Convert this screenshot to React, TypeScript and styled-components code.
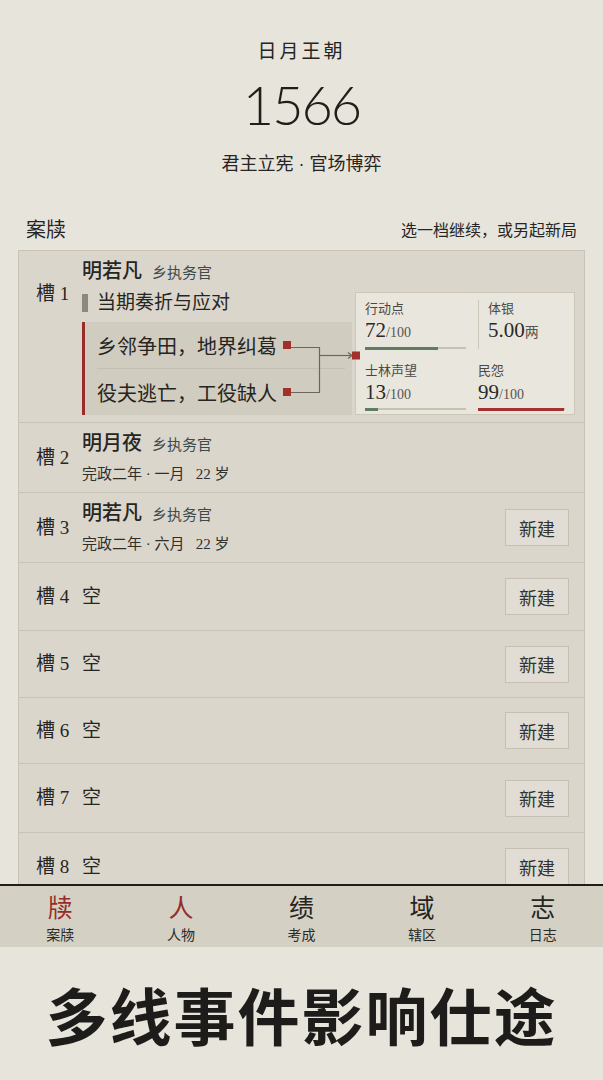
import React from 'react'
import styled, { createGlobalStyle } from 'styled-components'

const GlobalStyle = createGlobalStyle`
  html, body {
    margin: 0;
    padding: 0;
    background: #e7e4dc;
  }
  body {
    font-family: "Liberation Serif", "Noto Sans CJK SC", serif;
    color: #262522;
  }
`

const Page = styled.div`
  width: 603px;
  height: 1080px;
  display: flex;
  flex-direction: column;
  overflow: hidden;
  background: #e7e4dc;
`

const Screen = styled.div`
  height: 947px;
  display: flex;
  flex-direction: column;
`

const Scroll = styled.div`
  flex: 1;
  min-height: 0;
  overflow: hidden;
`

const Header = styled.header`
  display: flex;
  flex-direction: column;
  align-items: center;
  padding-top: 37px;
  font-family: "Noto Sans CJK SC", sans-serif;
`

const Dynasty = styled.div`
  font-size: 19px;
  line-height: 26px;
  letter-spacing: 3px;
`

const Year = styled.div`
  margin-top: 12px;
  font-family: Lato, "DejaVu Sans", sans-serif;
  font-weight: 300;
  font-size: 54px;
  line-height: 60px;
  letter-spacing: -2px;
  color: #1f1e1b;
`

const Motto = styled.div`
  margin-top: 14px;
  height: 26px;
  font-size: 18px;
  line-height: 26px;
`

const Sep = styled.span`
  font-family: "Liberation Sans", sans-serif;
  white-space: pre;
`

const SectionHead = styled.div`
  display: flex;
  justify-content: space-between;
  align-items: center;
  margin-top: 41px;
  padding: 0 26px;
  font-family: "Noto Sans CJK SC", sans-serif;
  line-height: 26px;
`

const SectionTitle = styled.span`
  font-size: 20px;
`

const SectionHint = styled.span`
  font-size: 16px;
`

const Panel = styled.div`
  margin: 8px 18px 0;
  border: 1px solid #c9c3b6;
  border-bottom: none;
  background: #dbd6cb;
`

const Row = styled.div<{ $h: number }>`
  display: grid;
  grid-template-columns: 46px 1fr auto;
  align-items: center;
  height: ${({ $h }) => $h}px;
  padding: 0 15px 0 17px;
  box-sizing: border-box;
  & + & {
    border-top: 1px solid #c9c3b6;
  }
`

const FirstRow = styled(Row)`
  align-items: start;
  padding-top: 8px;
`

const SlotLabel = styled.div<{ $top?: number }>`
  font-size: 19px;
  line-height: 24px;
  margin-top: ${({ $top }) => $top || 0}px;
  white-space: nowrap;
`

const Empty = styled.span`
  font-size: 19px;
  line-height: 24px;
`

const NameLine = styled.div`
  display: flex;
  align-items: baseline;
  line-height: 24px;
`

const Name = styled.span`
  font-size: 20px;
  font-weight: 500;
`

const Rank = styled.span`
  margin-left: 10px;
  font-size: 15px;
  color: #3d4b4c;
`

const Info = styled.div`
  margin-top: 6px;
  font-size: 15px;
  line-height: 22px;
  color: #302f2b;
  white-space: pre;
`

const Body = styled.div`
  display: flex;
  gap: 3px;
  margin-top: 7px;
`

const LeftCol = styled.div`
  width: 270px;
`

const Subtitle = styled.div`
  display: flex;
  align-items: center;
  gap: 9px;
  font-size: 19px;
  line-height: 22px;
  &::before {
    content: '';
    width: 6px;
    height: 18px;
    background: #8e897f;
  }
`

const EventBox = styled.div`
  position: relative;
  margin-top: 8px;
  border-left: 3px solid #9a2c28;
  background: #d1ccc0;
`

const EventLine = styled.div`
  display: flex;
  align-items: center;
  height: 46px;
  padding-left: 12px;
`

const EventText = styled.span`
  width: 186px;
  font-size: 20px;
  white-space: nowrap;
`

const Dot = styled.span`
  width: 8px;
  height: 8px;
  background: #a2302b;
`

const EventDivider = styled.div`
  height: 1px;
  margin: 0 7px 0 12px;
  background: #c5bfb2;
`

const Connector = styled.svg`
  position: absolute;
  left: 206px;
  top: 0;
  overflow: visible;
`

const StatCard = styled.div`
  width: 220px;
  height: 123px;
  box-sizing: border-box;
  padding: 7px 9px 0;
  border: 1px solid #cdc7ba;
  background: #e9e6de;
  display: grid;
  grid-template-columns: 101px 1fr;
  column-gap: 12px;
  row-gap: 13px;
  align-content: start;
`

const StatCell = styled.div<{ $divider?: boolean }>`
  padding-left: ${({ $divider }) => ($divider ? '9px' : '0')};
  border-left: ${({ $divider }) => ($divider ? '1px solid #cdc7ba' : 'none')};
`

const StatLabel = styled.div`
  font-size: 13px;
  line-height: 17px;
  color: #4b4944;
`

const StatValue = styled.div`
  margin-top: 1px;
  font-size: 21px;
  line-height: 24px;
  color: #2b2a27;
`

const StatUnit = styled.span`
  font-size: 14px;
  color: #57554f;
`

const Bar = styled.div`
  margin-top: 2px;
  height: 2px;
  background: #c6c1b5;
`

const Fill = styled.div<{ $color: string }>`
  height: 3px;
  margin-top: -0.5px;
  background: ${({ $color }) => $color};
`

const NewButton = styled.button`
  width: 64px;
  height: 37px;
  padding: 0;
  border: 1px solid #c6c0b3;
  background: #e1ddd4;
  font-family: "Noto Sans CJK SC", sans-serif;
  font-size: 18px;
  color: #34332f;
`

const Nav = styled.nav`
  display: grid;
  grid-template-columns: repeat(5, 1fr);
  height: 63px;
  box-sizing: border-box;
  padding-top: 6px;
  border-top: 2px solid #1e1d1b;
  background: #d5d0c4;
  font-family: "Noto Sans CJK SC", sans-serif;
`

const NavItem = styled.div<{ $active?: boolean }>`
  display: flex;
  flex-direction: column;
  align-items: center;
  color: ${({ $active }) => ($active ? '#962d2a' : '#252420')};
`

const NavGlyph = styled.span`
  font-size: 25px;
  line-height: 28px;
`

const NavLabel = styled.span`
  margin-top: 5px;
  font-size: 14px;
  line-height: 18px;
  color: #2a2925;
`

const Caption = styled.div`
  flex: 1;
  display: flex;
  align-items: center;
  justify-content: center;
  font-family: "Noto Sans CJK SC", sans-serif;
  font-weight: 700;
  font-size: 62px;
  letter-spacing: 2px;
  color: #1d1c1a;
`

type Stat = { label: string; value: string; unit: string; pct?: number; color?: string; divider?: boolean }

const stats: Stat[] = [
  { label: '行动点', value: '72', unit: '/100', pct: 72, color: '#5f7c66' },
  { label: '体银', value: '5.00', unit: '两', divider: true },
  { label: '士林声望', value: '13', unit: '/100', pct: 13, color: '#5f7c66' },
  { label: '民怨', value: '99', unit: '/100', pct: 99, color: '#a3332e' },
]

const nav = [
  { glyph: '牍', label: '案牍', active: true },
  { glyph: '人', label: '人物', active: true },
  { glyph: '绩', label: '考成' },
  { glyph: '域', label: '辖区' },
  { glyph: '志', label: '日志' },
]

const emptySlots = [
  { n: 4, h: 68 },
  { n: 5, h: 67 },
  { n: 6, h: 66 },
  { n: 7, h: 69 },
  { n: 8, h: 68 },
]

export default function App() {
  return (
    <Page>
      <GlobalStyle />
      <Screen>
        <Scroll>
          <Header>
            <Dynasty>日月王朝</Dynasty>
            <Year>1566</Year>
            <Motto>
              君主立宪<Sep> · </Sep>官场博弈
            </Motto>
          </Header>
          <SectionHead>
            <SectionTitle>案牍</SectionTitle>
            <SectionHint>选一档继续，或另起新局</SectionHint>
          </SectionHead>
          <Panel>
            <FirstRow $h={171}>
              <SlotLabel $top={23}>槽 1</SlotLabel>
              <div>
                <NameLine>
                  <Name>明若凡</Name>
                  <Rank>乡执务官</Rank>
                </NameLine>
                <Body>
                  <LeftCol>
                    <Subtitle>当期奏折与应对</Subtitle>
                    <EventBox>
                      <EventLine>
                        <EventText>乡邻争田，地界纠葛</EventText>
                        <Dot />
                      </EventLine>
                      <EventDivider />
                      <EventLine>
                        <EventText>役夫逃亡，工役缺人</EventText>
                        <Dot />
                      </EventLine>
                      <Connector width="80" height="94" viewBox="0 0 80 94">
                        <path d="M0 25.5H28.5V70.5H0" fill="none" stroke="#6b6760" strokeWidth="1.2" />
                        <path d="M28.5 33.5H60" fill="none" stroke="#6b6760" strokeWidth="1.2" />
                        <path d="M57 30.5L61 33.5L57 36.5" fill="none" stroke="#6b6760" strokeWidth="1.2" />
                        <rect x="61" y="29.5" width="8" height="8" fill="#a2302b" />
                      </Connector>
                    </EventBox>
                  </LeftCol>
                  <StatCard>
                    {stats.map((s) => (
                      <StatCell key={s.label} $divider={s.divider}>
                        <StatLabel>{s.label}</StatLabel>
                        <StatValue>
                          {s.value}
                          <StatUnit>{s.unit}</StatUnit>
                        </StatValue>
                        {s.pct !== undefined && (
                          <Bar>
                            <Fill $color={s.color || '#5f7c66'} style={{ width: `${s.pct}%` }} />
                          </Bar>
                        )}
                      </StatCell>
                    ))}
                  </StatCard>
                </Body>
              </div>
              <span />
            </FirstRow>
            <Row $h={70}>
              <SlotLabel>槽 2</SlotLabel>
              <div>
                <NameLine>
                  <Name>明月夜</Name>
                  <Rank>乡执务官</Rank>
                </NameLine>
                <Info>完政二年 · 一月   22 岁</Info>
              </div>
              <span />
            </Row>
            <Row $h={70}>
              <SlotLabel>槽 3</SlotLabel>
              <div>
                <NameLine>
                  <Name>明若凡</Name>
                  <Rank>乡执务官</Rank>
                </NameLine>
                <Info>完政二年 · 六月   22 岁</Info>
              </div>
              <NewButton>新建</NewButton>
            </Row>
            {emptySlots.map((s) => (
              <Row key={s.n} $h={s.h}>
                <SlotLabel>槽 {s.n}</SlotLabel>
                <Empty>空</Empty>
                <NewButton>新建</NewButton>
              </Row>
            ))}
          </Panel>
        </Scroll>
        <Nav>
          {nav.map((n) => (
            <NavItem key={n.label} $active={n.active}>
              <NavGlyph>{n.glyph}</NavGlyph>
              <NavLabel>{n.label}</NavLabel>
            </NavItem>
          ))}
        </Nav>
      </Screen>
      <Caption>多线事件影响仕途</Caption>
    </Page>
  )
}
